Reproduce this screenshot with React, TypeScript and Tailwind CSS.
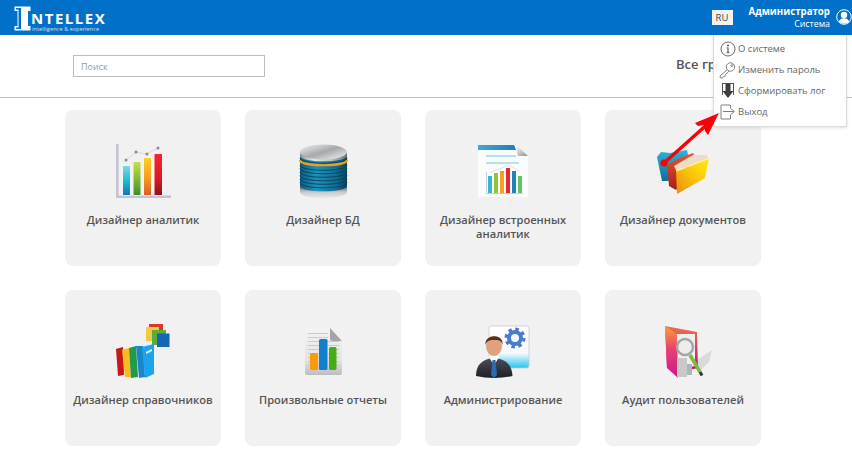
import React from "react";

const font = { fontFamily: '"Open Sans", "Liberation Sans", sans-serif' };

const AnalyticsIcon = () => (
  <svg width="60" height="60" viewBox="0 0 60 60">
    <defs>
      <linearGradient id="a1" x1="0" y1="0" x2="0" y2="1"><stop offset="0" stopColor="#7fdad8" /><stop offset="0.55" stopColor="#10bcd2" /><stop offset="1" stopColor="#1276b4" /></linearGradient>
      <linearGradient id="a2" x1="0" y1="0" x2="0" y2="1"><stop offset="0" stopColor="#c4e04a" /><stop offset="0.5" stopColor="#84bd2c" /><stop offset="1" stopColor="#3f8c2e" /></linearGradient>
      <linearGradient id="a3" x1="0" y1="0" x2="0" y2="1"><stop offset="0" stopColor="#ffcf22" /><stop offset="0.5" stopColor="#f9a01b" /><stop offset="1" stopColor="#dc5b22" /></linearGradient>
      <linearGradient id="a4" x1="0" y1="0" x2="0" y2="1"><stop offset="0" stopColor="#f9262c" /><stop offset="0.6" stopColor="#d91a22" /><stop offset="1" stopColor="#8f1116" /></linearGradient>
    </defs>
    <rect x="3" y="4" width="2.5" height="54" fill="#c2c4d2" />
    <rect x="3" y="55.5" width="55" height="2.5" fill="#c2c4d2" />
    <rect x="9.5" y="25.5" width="8" height="30" fill="#f6f6f8" />
    <rect x="20" y="21.5" width="8" height="34" fill="#f6f6f8" />
    <rect x="30.5" y="17.5" width="8" height="38" fill="#f6f6f8" />
    <rect x="41" y="13.5" width="8.5" height="42" fill="#f6f6f8" />
    <rect x="10" y="26" width="7" height="29" fill="url(#a1)" />
    <rect x="20.5" y="22" width="7" height="33" fill="url(#a2)" />
    <rect x="31" y="18" width="7" height="37" fill="url(#a3)" />
    <rect x="41.5" y="14" width="7.5" height="41" fill="url(#a4)" />
    <path d="M13 20 L23 12 L34 14 L45 8" fill="none" stroke="#d8d8dc" strokeWidth="1" />
    <g fill="#8b8b95">
      <circle cx="13" cy="20" r="1.5" />
      <circle cx="23" cy="12" r="1.5" />
      <circle cx="34" cy="14" r="1.5" />
      <circle cx="45" cy="8" r="1.5" />
    </g>
  </svg>
);

const DatabaseIcon = () => {
  const rings = [18, 25, 28.5, 32, 35.5, 39, 42.5];
  return (
    <svg width="60" height="60" viewBox="0 0 60 60">
      <defs>
        <linearGradient id="d1" x1="0" y1="0" x2="1" y2="0"><stop offset="0" stopColor="#8d9094" /><stop offset="0.3" stopColor="#e8e8e8" /><stop offset="0.7" stopColor="#b9babd" /><stop offset="1" stopColor="#6e7074" /></linearGradient>
        <linearGradient id="d2" x1="0" y1="0" x2="1" y2="0"><stop offset="0" stopColor="#0a5c80" /><stop offset="0.35" stopColor="#1d93bd" /><stop offset="0.75" stopColor="#0f6f98" /><stop offset="1" stopColor="#07435f" /></linearGradient>
        <linearGradient id="d3" x1="0" y1="0" x2="1" y2="1"><stop offset="0" stopColor="#f2f2f2" /><stop offset="0.5" stopColor="#a6a8ab" /><stop offset="1" stopColor="#f5f5f5" /></linearGradient>
        <linearGradient id="d4" x1="0" y1="0" x2="0" y2="1"><stop offset="0" stopColor="#55585c" /><stop offset="0.5" stopColor="#c9cacc" /><stop offset="1" stopColor="#e9e9ea" /></linearGradient>
      </defs>
      <path d="M7 46 V52 C7 60 54 60 54 52 V46 Z" fill="url(#d4)" />
      <path d="M7 12 V46 C7 53 54 53 54 46 V12 Z" fill="url(#d2)" />
      {rings.map((y) => (
        <path key={y} d={`M7 ${y} C7 ${y + 7} 54 ${y + 7} 54 ${y}`} fill="none" stroke="#0b3f59" strokeWidth="0.9" />
      ))}
      <path d="M7 20 C7 27 54 27 54 20" fill="none" stroke="#f0a010" strokeWidth="2.2" />
      <path d="M7 12 V16 C7 23 54 23 54 16 V12 Z" fill="url(#d1)" />
      <ellipse cx="30.5" cy="12" rx="23.5" ry="7.5" fill="url(#d3)" />
    </svg>
  );
};

const EmbeddedIcon = () => {
  const bars = [
    [15, 36, "#37b6cf"],
    [21, 33, "#8dc63f"],
    [27, 31, "#f7a11a"],
    [33, 28, "#e6272d"],
    [39, 31, "#1f80c4"],
    [45, 36, "#5fc46a"],
  ] as const;
  return (
    <svg width="60" height="60" viewBox="0 0 60 60">
      <defs>
        <linearGradient id="e1" x1="0" y1="0" x2="1" y2="0"><stop offset="0" stopColor="#3fa8dc" /><stop offset="1" stopColor="#1d7cba" /></linearGradient>
        <linearGradient id="e2" x1="0" y1="0" x2="1" y2="1"><stop offset="0" stopColor="#ffffff" /><stop offset="1" stopColor="#8f8f8f" /></linearGradient>
      </defs>
      <path d="M5 5 H43 L55 16 V57 H5 Z" fill="#fbfcfd" />
      <path d="M5 5 H41 L43 10 H5 Z" fill="url(#e1)" />
      <path d="M43 5 L55 16 H45 Q43 12 43 5 Z" fill="url(#e2)" />
      <rect x="13" y="15.5" width="30" height="1" fill="#6fc3e6" />
      <rect x="13" y="22.5" width="33" height="1" fill="#6fc3e6" />
      <rect x="13" y="32" width="1" height="22" fill="#c9cfd8" />
      <rect x="13" y="53" width="37" height="1" fill="#c9cfd8" />
      {bars.map(([x, y, c]) => (
        <rect key={x} x={x} y={y} width="4" height={53 - y} fill={c} />
      ))}
      <path d="M17 33 L23 30 L29 28 L35 25 L41 28 L47 32" fill="none" stroke="#c9c9c9" strokeWidth="0.6" />
    </svg>
  );
};

const FoldersIcon = () => (
  <svg width="60" height="60" viewBox="0 0 60 60">
    <defs>
      <linearGradient id="f1" x1="1" y1="0" x2="0" y2="1"><stop offset="0" stopColor="#ffee10" /><stop offset="0.5" stopColor="#fbc30c" /><stop offset="1" stopColor="#e88b10" /></linearGradient>
      <linearGradient id="f2" x1="0" y1="0" x2="0" y2="1"><stop offset="0" stopColor="#2fb2dc" /><stop offset="1" stopColor="#0e6f9c" /></linearGradient>
      <linearGradient id="f3" x1="0" y1="0" x2="0" y2="1"><stop offset="0" stopColor="#e35a2f" /><stop offset="1" stopColor="#a51d1a" /></linearGradient>
    </defs>
    <path d="M4 17 L8 12 L17 13 L34 10 L36 20 L15 41 L9 41 Z" fill="url(#f2)" />
    <path d="M14 25 L24 19 L40 13 L44 20 L23 50 L16 46 Z" fill="url(#f3)" />
    <path d="M21 26 L40 15 L54 15 L55 18 L24 32 Z" fill="#ecdcc8" />
    <path d="M23 30 L56 18 L52 38 L24 54 Z" fill="url(#f1)" />
    <path d="M23 30 L56 18 L56 19 L23.5 31.5 Z" fill="#fff6b0" />
  </svg>
);

const BooksIcon = () => (
  <svg width="60" height="60" viewBox="0 0 60 60">
    <rect x="36" y="4" width="14" height="12" fill="#d9372a" />
    <rect x="33" y="7" width="13" height="14" fill="#f5c842" />
    <rect x="39" y="10" width="14" height="15" fill="#5cab3f" />
    <rect x="44" y="13.5" width="12.5" height="13.5" fill="#1467b3" />
    <path d="M3 29 L10 27 L11 55 L5 56 Z" fill="#c8181c" />
    <path d="M9 30 L16 28 L18 57 L12 57 Z" fill="#f8bd1d" />
    <path d="M16 28 L23 26 L25 57 L18 58 Z" fill="#229a49" />
    <path d="M23 26 L30 26 L32 57 L26 58 Z" fill="#1a86c9" />
    <path d="M29 27 L41 24 L41 54 L32 58 Z" fill="#1ea3ee" />
    <path d="M33 32 L39 29 L39 31 L33 34 Z" fill="#ffffff" />
  </svg>
);

const ReportIcon = () => (
  <svg width="60" height="60" viewBox="0 0 60 60">
    <defs>
      <linearGradient id="r1" x1="0" y1="0" x2="0" y2="1"><stop offset="0" stopColor="#f4f4f4" /><stop offset="0.7" stopColor="#e3e3e3" /><stop offset="1" stopColor="#bdbdbd" /></linearGradient>
    </defs>
    <path d="M12 8 H37 L49 21 V53 Q49 55 47 55 H14 Q12 55 12 53 Z" fill="url(#r1)" />
    <path d="M37 8 L49 21 H39 Q37 21 37 19 Z" fill="#a5a5a5" />
    {[13, 17, 21, 25, 29, 33, 37, 41, 45].map((y) => (
      <rect key={y} x="15" y={y} width={y < 21 ? 20 : 31} height="0.8" fill="#c4c4c4" />
    ))}
    <rect x="17" y="33" width="8" height="17" rx="1.5" fill="#f79b0c" />
    <rect x="26" y="19" width="8.5" height="31" rx="1.5" fill="#1180cc" />
    <rect x="36" y="27" width="7.5" height="23" rx="1.5" fill="#46ae14" />
  </svg>
);

const AdminIcon = () => (
  <svg width="60" height="60" viewBox="0 0 60 60">
    <defs>
      <linearGradient id="p1" x1="0" y1="0" x2="0" y2="1"><stop offset="0" stopColor="#ffffff" /><stop offset="0.65" stopColor="#f2fafd" /><stop offset="1" stopColor="#27c4ee" /></linearGradient>
      <linearGradient id="p2" x1="0" y1="0" x2="0" y2="1"><stop offset="0" stopColor="#4a4f57" /><stop offset="1" stopColor="#1d2025" /></linearGradient>
    </defs>
    <rect x="16" y="6" width="40" height="42" rx="2.5" fill="url(#p1)" stroke="#c5c9cc" strokeWidth="0.8" />
    <circle cx="42" cy="18" r="6" fill="none" stroke="#3f7fd0" strokeWidth="4" />
    <circle cx="42" cy="18" r="9" fill="none" stroke="#5a6fc8" strokeWidth="3" strokeDasharray="3.5 3.57" />
    <path d="M3 56 C3 44 10 39 21 38 C32 39 39 44 39.5 56 Q21 60 3 56 Z" fill="url(#p2)" />
    <path d="M15 36 L21 45 L27 36 Z" fill="#ffffff" />
    <path d="M19.5 40 H22.5 L24 55 L21 58 L18 55 Z" fill="#2a6bb4" />
    <ellipse cx="21" cy="26" rx="8" ry="10" fill="#e0a27c" />
    <path d="M12.5 25 C11 14 31 13 29.5 25 C28 19 24 20 21 20 C18 20 14 20 12.5 25 Z" fill="#5a2f1f" />
  </svg>
);

const AuditIcon = () => (
  <svg width="60" height="60" viewBox="0 0 60 60">
    <defs>
      <linearGradient id="u1" x1="0" y1="0" x2="0" y2="1"><stop offset="0" stopColor="#f8a03a" /><stop offset="0.45" stopColor="#ea3f70" /><stop offset="1" stopColor="#c71a8c" /></linearGradient>
      <linearGradient id="u2" x1="0" y1="0" x2="0" y2="1"><stop offset="0" stopColor="#f0704a" /><stop offset="1" stopColor="#b8127c" /></linearGradient>
    </defs>
    <path d="M44 40 L59 30 L56 42 L46 52 Z" fill="#dadada" />
    <path d="M12 6 L44 12 L45 48 L26 52 L14 48 Z" fill="url(#u2)" />
    <path d="M24 14 L42 14 L42 46 L24 50 Z" fill="#f1eef0" />
    <path d="M12 6 L24 14 L25 58 L14 48 Z" fill="url(#u1)" />
    <rect x="24" y="38" width="10" height="19" fill="#c8c8c8" />
    <rect x="34" y="44" width="5" height="11" fill="#b5b5b5" />
    <circle cx="32" cy="27" r="8" fill="#ececec" fillOpacity="0.6" stroke="#a2a6a8" strokeWidth="2.5" />
    <path d="M37 35 L47 52" stroke="#7dbb3c" strokeWidth="3.5" />
    <path d="M47 52 L49 55.5" stroke="#333333" strokeWidth="3" />
  </svg>
);

const items = [
  { title: "Дизайнер аналитик", icon: AnalyticsIcon },
  { title: "Дизайнер БД", icon: DatabaseIcon },
  { title: "Дизайнер встроенных аналитик", icon: EmbeddedIcon },
  { title: "Дизайнер документов", icon: FoldersIcon },
  { title: "Дизайнер справочников", icon: BooksIcon },
  { title: "Произвольные отчеты", icon: ReportIcon },
  { title: "Администрирование", icon: AdminIcon },
  { title: "Аудит пользователей", icon: AuditIcon },
];

const Logo = () => (
  <div className="flex items-start pl-[14px] pt-[6px]">
    <svg width="17" height="25" viewBox="0 0 17 25" className="shrink-0">
      <path d="M0.5 0.5 H16.5 V5 H14 V20 H16.5 V24.5 H0.5 V20 H3.5 V5 H0.5 Z" fill="#ffffff" />
      <path d="M2 2 H7 V4 H5 V21.5 H7 V23 H2 V21.5 H4.5 V3.5 H2 Z" fill="#0070c8" />
      <rect x="5" y="2" width="2" height="21" fill="#0070c8" />
    </svg>
    <div className="pt-[5px] text-white">
      <div className="text-[15px] leading-[14px] font-bold tracking-[1.5px]">NTELLEX</div>
      <div className="mt-[1px] pl-[1px] text-[5.5px] leading-[6px] tracking-[0.12px] opacity-80">intelligence &amp; experience</div>
    </div>
  </div>
);

const MenuItem = ({ icon, label }: { icon: React.ReactNode; label: string }) => (
  <div className="flex items-center h-[21px] pl-[5px] gap-[2px] text-[9.5px] text-[#666]">
    <span className="w-[17px] h-[18px] flex items-center justify-center shrink-0">{icon}</span>
    <span>{label}</span>
  </div>
);

const UserMenu = () => (
  <div className="absolute left-[713px] top-[35px] w-[134px] h-[92px] bg-white border border-t-0 border-[#dcdcdc] shadow-[0_1px_3px_rgba(0,0,0,0.12)] pt-[3.5px]">
    <MenuItem
      label="О системе"
      icon={
        <svg width="16" height="16" viewBox="0 0 16 16" fill="none" stroke="#555" strokeWidth="0.9">
          <circle cx="8" cy="8" r="7" />
          <path d="M6.5 6.5 H8.6 V11.5 H9.6 V12.3 H6.4 V11.5 H7.4 V7.3 H6.5 Z" fill="#555" stroke="none" />
          <circle cx="8" cy="4.4" r="1" fill="#555" stroke="none" />
        </svg>
      }
    />
    <MenuItem
      label="Изменить пароль"
      icon={
        <svg width="17" height="17" viewBox="0 0 17 17" fill="none" stroke="#808080" strokeWidth="1">
          <circle cx="11.5" cy="5" r="4.2" />
          <circle cx="13" cy="3.6" r="0.9" />
          <path d="M8.5 7.5 L1 14 L1.5 16 L3.5 16 L4.5 14.5 L6 14 L6.5 12.5 L10 9.2" />
        </svg>
      }
    />
    <MenuItem
      label="Сформировать лог"
      icon={
        <svg width="16" height="18" viewBox="0 0 16 18">
          <path d="M2 1 H14 V13 H13 V2 H3 V13 H2 Z" fill="#555" />
          <path d="M5.5 2 H10.5 V9 H13.5 L8 16 L2.5 9 H5.5 Z" fill="#3c3c3c" />
        </svg>
      }
    />
    <MenuItem
      label="Выход"
      icon={
        <svg width="16" height="16" viewBox="0 0 16 16" fill="none" stroke="#808080" strokeWidth="1">
          <path d="M10.5 4 V1 H1 V15 H10.5 V11" />
          <path d="M3 7.5 H13.5 M10.5 4.5 L14.5 7.5 L10.5 10.5" />
        </svg>
      }
    />
  </div>
);

export default function App() {
  return (
    <div className="relative w-[852px] h-[452px] bg-white overflow-hidden" style={font}>
      <header className="h-[35px] bg-[#0070c8] flex justify-between">
        <Logo />
        <div className="flex items-start">
          <div className="mt-[10px] w-[21px] h-[15px] bg-[#f2f2f2] text-[9.5px] leading-[15px] text-center text-[#444]">RU</div>
          <div className="ml-[16px] pt-[6px] text-right text-white">
            <div className="text-[9.7px] leading-[12px] font-bold">Администратор</div>
            <div className="text-[8.8px] leading-[12px]">Система</div>
          </div>
          <svg width="16" height="16" viewBox="0 0 16 16" className="ml-[6px] mt-[9px]">
            <circle cx="8" cy="8" r="7.3" fill="#0070c8" stroke="#fff" strokeWidth="1" />
            <circle cx="8" cy="6" r="3.2" fill="#fff" />
            <path d="M2.8 13 C3.5 9.8 6 9.2 8 9.2 C10 9.2 12.5 9.8 13.2 13 Q8 16.5 2.8 13 Z" fill="#fff" />
          </svg>
        </div>
      </header>

      <div className="h-[63px] border-b border-[#c0c0c0] flex items-start">
        <input
          placeholder="Поиск"
          className="ml-[73px] mt-[20px] w-[192px] h-[22px] border border-[#bdbdbd] px-[7px] text-[9px] text-[#666] placeholder:text-[#999] outline-none"
        />
        <div className="ml-[411px] mt-[19px] text-[13px] leading-[20px] font-semibold text-[#555] whitespace-nowrap">Все группы</div>
      </div>

      <div className="grid grid-cols-[repeat(4,156px)] gap-6 pl-[65px] pt-3">
        {items.map((item) => (
          <div key={item.title} className="h-[156px] rounded-lg bg-[#f1f1f1] flex flex-col items-center pt-[30px] px-1">
            <item.icon />
            <div className="mt-[13px] text-[11.1px] leading-[14px] font-semibold text-[#555] text-center">{item.title}</div>
          </div>
        ))}
      </div>

      <UserMenu />

      <svg width="70" height="65" viewBox="0 0 70 65" className="absolute left-[658px] top-[107px]">
        <path d="M6 56 L53 14" stroke="#fb0007" strokeWidth="3.4" strokeLinecap="round" fill="none" />
        <path d="M61 6 L37 16 L40 19 L46 18 L47 24 L50 28 Z" fill="#fb0007" />
        <circle cx="6" cy="56" r="3.6" fill="#fb0007" />
      </svg>
    </div>
  );
}
